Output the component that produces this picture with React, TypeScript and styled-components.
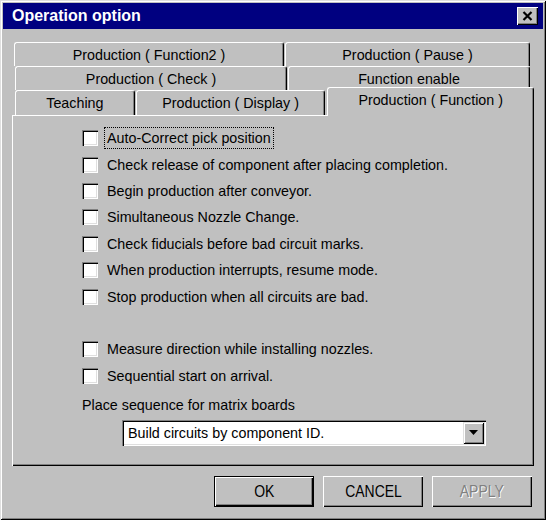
import styled, { createGlobalStyle } from 'styled-components';

const GlobalStyle = createGlobalStyle`
  html, body {
    margin: 0;
    padding: 0;
    background: #c0c0c0;
  }
  body {
    font-family: "Liberation Sans", Arial, sans-serif;
  }
`;

const OPTIONS_TOP = [
  { label: 'Auto-Correct pick position', focused: true },
  { label: 'Check release of component after placing completion.' },
  { label: 'Begin production after conveyor.' },
  { label: 'Simultaneous Nozzle Change.' },
  { label: 'Check fiducials before bad circuit marks.' },
  { label: 'When production interrupts, resume mode.' },
  { label: 'Stop production when all circuits are bad.' },
];

const OPTIONS_BOTTOM = [
  { label: 'Measure direction while installing nozzles.' },
  { label: 'Sequential start on arrival.' },
];

const TAB_ROWS = [
  { indent: 2, height: 24, tabs: [{ title: 'Production ( Function2 )', w: 270 }, { title: 'Production ( Pause )', w: 245 }] },
  { indent: 3, height: 24, tabs: [{ title: 'Production ( Check )', w: 272 }, { title: 'Function enable', w: 242 }] },
  {
    indent: 3,
    height: 25,
    tabs: [
      { title: 'Teaching', w: 120 },
      { title: 'Production ( Display )', w: 190 },
      { title: 'Production ( Function )', w: 207, active: true },
    ],
  },
];

export default function App() {
  return (
    <>
      <GlobalStyle />
      <Window>
        <TitleBar>
          <Title>Operation option</Title>
          <CloseButton aria-label="Close">
            <svg width="11" height="10" viewBox="0 0 11 10">
              <path d="M1.5 1 L9.5 9 M9.5 1 L1.5 9" stroke="#000" strokeWidth="2.2" fill="none" />
            </svg>
          </CloseButton>
        </TitleBar>

        <Body>
          <TabStrip>
            {TAB_ROWS.map((row, i) => (
              <TabRow key={i} $indent={row.indent} $h={row.height}>
                {row.tabs.map((tab) => (
                  <Tab key={tab.title} $w={tab.w} $active={tab.active}>
                    {tab.title}
                  </Tab>
                ))}
              </TabRow>
            ))}
          </TabStrip>

          <Panel>
            <CheckList>
              {OPTIONS_TOP.map((opt) => (
                <CheckRow key={opt.label}>
                  <CheckBox />
                  <CheckLabel $focused={opt.focused}>{opt.label}</CheckLabel>
                </CheckRow>
              ))}
            </CheckList>
            <CheckList $gap>
              {OPTIONS_BOTTOM.map((opt) => (
                <CheckRow key={opt.label}>
                  <CheckBox />
                  <CheckLabel>{opt.label}</CheckLabel>
                </CheckRow>
              ))}
            </CheckList>

            <FieldLabel>Place sequence for matrix boards</FieldLabel>
            <ComboBox>
              <ComboText>Build circuits by component ID.</ComboText>
              <ComboArrow>
                <svg width="9" height="5" viewBox="0 0 9 5">
                  <polygon points="0,0 9,0 4.5,5" fill="#000" />
                </svg>
              </ComboArrow>
            </ComboBox>
          </Panel>

          <ButtonRow>
            <Button $default>
              <ButtonText>OK</ButtonText>
            </Button>
            <Button>
              <ButtonText>CANCEL</ButtonText>
            </Button>
            <Button $disabled>
              <ButtonText>APPLY</ButtonText>
            </Button>
          </ButtonRow>
        </Body>
      </Window>
    </>
  );
}

const Window = styled.div`
  width: 546px;
  height: 520px;
  box-sizing: border-box;
  padding: 3px;
  background: #c0c0c0;
  display: flex;
  flex-direction: column;
  box-shadow: inset 1px 1px #dfdfdf, inset -1px -1px #000, inset 2px 2px #fff, inset -2px -2px #808080;
`;

const TitleBar = styled.div`
  height: 26px;
  background: #000080;
  display: flex;
  align-items: center;
  justify-content: space-between;
  padding: 0 5px 0 9px;
`;

const Title = styled.span`
  color: #fff;
  font-weight: bold;
  font-size: 16px;
  line-height: 18px;
`;

const CloseButton = styled.div`
  width: 21px;
  height: 18px;
  box-sizing: border-box;
  background: #c0c0c0;
  display: flex;
  align-items: center;
  justify-content: center;
  box-shadow: inset 1px 1px #fff, inset -1px -1px #000, inset -2px -2px #808080;
`;

const Body = styled.div`
  display: flex;
  flex-direction: column;
  padding: 13px 9px 0 9px;
`;

const TabStrip = styled.div`
  display: flex;
  flex-direction: column;
`;

const TabRow = styled.div<{ $indent: number; $h: number }>`
  display: flex;
  gap: 1px;
  height: ${(p) => p.$h}px;
  padding-left: ${(p) => p.$indent}px;
`;

const Tab = styled.div<{ $w: number; $active?: boolean }>`
  width: ${(p) => p.$w}px;
  box-sizing: border-box;
  display: flex;
  align-items: center;
  justify-content: center;
  font-size: 14.3px;
  color: #000;
  background: #c0c0c0;
  border-top: 1px solid #fff;
  border-left: 1px solid #fff;
  border-right: 1px solid #000;
  border-radius: 3px 3px 0 0;
  box-shadow: inset -1px 0 #808080;
  ${(p) =>
    p.$active &&
    `
    position: relative;
    z-index: 1;
    height: 29px;
    margin-top: -3px;
    margin-left: 1px;
    padding-bottom: 4px;
  `}
`;

const Panel = styled.div`
  height: 351px;
  box-sizing: border-box;
  padding: 10px 0 0 70px;
  display: flex;
  flex-direction: column;
  box-shadow: inset 1px 1px #fff, inset -1px -1px #000, inset -2px -2px #808080;
`;

const CheckList = styled.div<{ $gap?: boolean }>`
  display: flex;
  flex-direction: column;
  margin-top: ${(p) => (p.$gap ? '26.4px' : '0')};
`;

const CheckRow = styled.div`
  display: flex;
  align-items: center;
  gap: 6px;
  height: 26.4px;
`;

const CheckBox = styled.span`
  width: 16px;
  height: 16px;
  flex: none;
  background: #fff;
  box-shadow: inset 1px 1px #808080, inset 2px 2px #000, inset -1px -1px #fff, inset -2px -2px #dfdfdf;
`;

const CheckLabel = styled.span<{ $focused?: boolean }>`
  font-size: 14.3px;
  line-height: 18px;
  padding: 1px 2px;
  color: #000;
  border: 1px dotted ${(p) => (p.$focused ? '#000' : 'transparent')};
`;

const FieldLabel = styled.div`
  font-size: 14.3px;
  line-height: 17px;
  margin-top: 8px;
  color: #000;
`;

const ComboBox = styled.div`
  margin: 6px 0 0 40px;
  width: 364px;
  height: 26px;
  box-sizing: border-box;
  padding: 2px;
  background: #fff;
  display: flex;
  align-items: center;
  box-shadow: inset 1px 1px #808080, inset 2px 2px #000, inset -1px -1px #fff, inset -2px -2px #dfdfdf;
`;

const ComboText = styled.span`
  flex: 1;
  font-size: 14.3px;
  padding-left: 4px;
  color: #000;
`;

const ComboArrow = styled.div`
  width: 21px;
  height: 22px;
  background: #c0c0c0;
  display: flex;
  align-items: center;
  justify-content: center;
  box-shadow: inset 1px 1px #dfdfdf, inset -1px -1px #000, inset 2px 2px #fff, inset -2px -2px #808080;
`;

const ButtonRow = styled.div`
  display: flex;
  justify-content: flex-end;
  gap: 9px;
  margin-top: 10px;
  padding-right: 2px;
`;

const Button = styled.div<{ $default?: boolean; $disabled?: boolean }>`
  width: 100px;
  height: 31px;
  box-sizing: border-box;
  display: flex;
  align-items: center;
  justify-content: center;
  font-size: 17px;
  color: ${(p) => (p.$disabled ? '#808080' : '#000')};
  text-shadow: ${(p) => (p.$disabled ? '1px 1px #fff' : 'none')};
  background: #c0c0c0;
  box-shadow: ${(p) =>
    p.$default
      ? 'inset 0 0 0 1px #000, inset 2px 2px #fff, inset -2px -2px #000, inset -3px -3px #808080'
      : 'inset 1px 1px #fff, inset -1px -1px #000, inset -2px -2px #808080'};
`;

const ButtonText = styled.span`
  display: inline-block;
  transform: scaleX(0.82);
`;
